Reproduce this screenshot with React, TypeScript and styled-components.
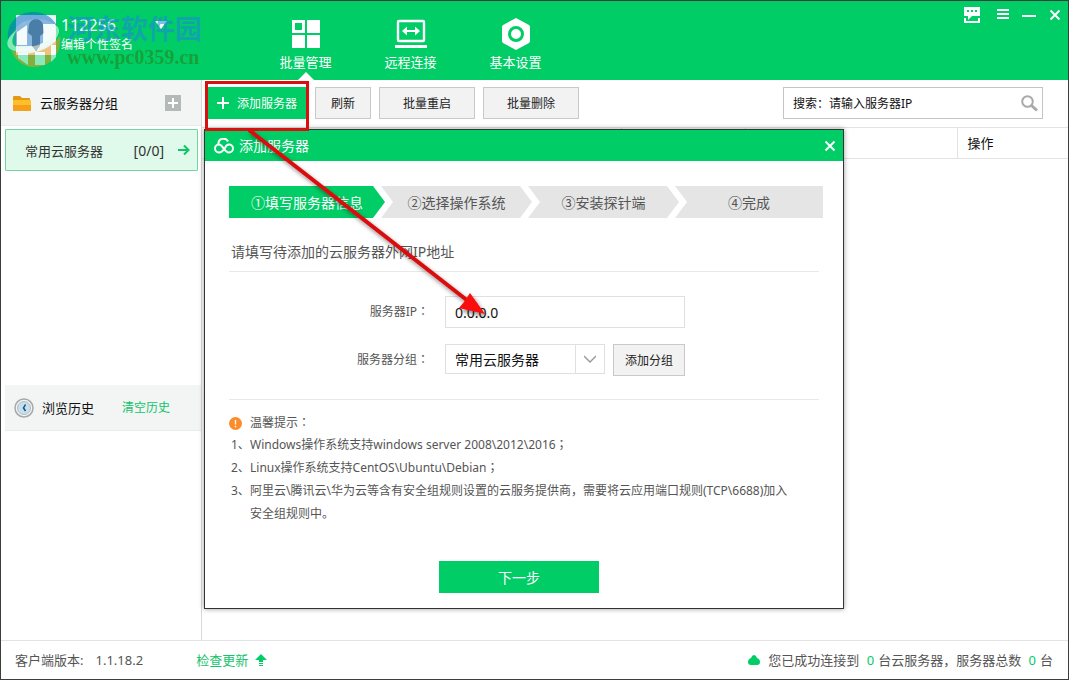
import React from 'react';
import styled, { createGlobalStyle } from 'styled-components';

const green = '#00cd66';
const line = '#e3e3e3';

const GlobalStyle = createGlobalStyle`
  * { box-sizing: border-box; }
  body {
    margin: 0;
    font-family: "Noto Sans", "Noto Sans CJK SC", sans-serif;
    font-size: 13px;
    line-height: 20px;
    color: #111;
    background: #fff;
  }
  button, input, select { font-family: inherit; color: inherit; }
  button { cursor: pointer; }
  svg { flex: none; }
`;

const Window = styled.div`
  position: relative;
  display: flex;
  flex-direction: column;
  min-height: 100vh;
  border: 1px solid #3a3f3c;
  background: #fff;
`;

const Header = styled.header`
  position: relative;
  display: flex;
  height: 79px;
  background: ${green};
  color: #fff;
`;

const Profile = styled.div`
  display: flex;
  gap: 5px;
  width: 252px;
  padding: 14px 0 0 15px;
`;

const ProfileText = styled.div`
  display: flex;
  flex-direction: column;
`;

const UserName = styled.div`
  display: flex;
  align-items: center;
  justify-content: space-between;
  width: 106px;
  font-size: 16px;
  line-height: 20px;
`;

const Signature = styled.span`
  font-size: 12px;
  line-height: 20px;
`;

const Nav = styled.nav`
  display: flex;
`;

const NavItem = styled.button<{ $active?: boolean }>`
  display: flex;
  flex-direction: column;
  align-items: center;
  width: 105px;
  padding: 17px 0 0;
  border: 0;
  background: none;
  color: #fff;
  font-size: 13px;
  line-height: 20px;

  & > svg { margin-bottom: 2px; }

  &::after {
    content: '';
    margin-top: auto;
    border: solid transparent;
    border-width: 0 8px 8px;
    border-bottom-color: ${p => (p.$active ? '#fff' : 'transparent')};
  }
`;

const WindowControls = styled.div`
  display: flex;
  align-items: center;
  gap: 13px;
  height: 28px;
  margin-left: auto;
  padding-right: 7px;
`;

const IconButton = styled.button`
  display: flex;
  padding: 0;
  border: 0;
  background: none;
  color: inherit;
`;

const Watermark = styled.div`
  position: absolute;
  left: 4px;
  top: 10px;
  display: flex;
  gap: 5px;
  opacity: 0.55;
  pointer-events: none;
`;

const WatermarkName = styled.div`
  color: #1c86e0;
  font-size: 27px;
  font-weight: 700;
  line-height: 36px;
`;

const WatermarkUrl = styled.div`
  color: #2c7d14;
  font-family: "Liberation Serif", serif;
  font-size: 20px;
  font-weight: 700;
  line-height: 20px;
`;

const Body = styled.div`
  display: flex;
  flex: 1;
`;

const Sidebar = styled.aside`
  width: 201px;
  border-right: 1px solid #d9d9d9;
`;

const GroupHeader = styled.div`
  display: flex;
  align-items: center;
  gap: 8px;
  height: 46px;
  padding: 0 20px 0 11px;
  background: #f2f5f4;
  border-bottom: 1px solid #e9eceb;

  & > button { margin-left: auto; }
`;

const GroupList = styled.div`
  min-height: 259px;
  padding: 3px 3px 0 4px;
`;

const GroupItem = styled.button`
  display: flex;
  align-items: center;
  width: 100%;
  height: 42px;
  padding: 0 7px 0 19px;
  border: 1px solid #74d3a0;
  border-radius: 1px;
  background: #dff9ea;
  color: #333;
  font-size: 13px;
`;

const GroupCount = styled.span`
  margin: 0 14px 0 auto;
  font-size: 14px;
`;

const History = styled.div`
  display: flex;
  align-items: center;
  gap: 8px;
  height: 46px;
  margin-left: 4px;
  padding: 0 31px 0 9px;
  background: #f2f5f4;
  border-bottom: 1px solid #e9eceb;
`;

const TextLink = styled.a<{ $small?: boolean }>`
  display: flex;
  align-items: center;
  gap: 7px;
  color: #14c46a;
  font-size: ${p => (p.$small ? 12 : 13)}px;
  text-decoration: none;
`;

const HistoryLink = styled(TextLink)`
  margin-left: auto;
`;

const Main = styled.main`
  flex: 1;
  min-width: 0;
`;

const Toolbar = styled.div`
  display: flex;
  align-items: flex-start;
  gap: 8px;
  height: 47px;
  padding: 7px 25px 0 5px;
`;

const Button = styled.button<{ $primary?: boolean; $width: number }>`
  display: flex;
  align-items: center;
  justify-content: center;
  gap: 8px;
  width: ${p => p.$width}px;
  height: 32px;
  padding: 0;
  border: 1px solid ${p => (p.$primary ? green : '#c9c9c9')};
  background: ${p => (p.$primary ? green : '#f2f2f2')};
  color: ${p => (p.$primary ? '#fff' : '#222')};
  font-size: 12px;
`;

const NextButton = styled(Button)`
  margin-left: 210px;
  font-size: 14px;
`;

const SearchBox = styled.label`
  display: flex;
  align-items: center;
  width: 260px;
  height: 32px;
  margin-left: auto;
  padding: 0 4px 0 9px;
  border: 1px solid #c4c4c4;
`;

const SearchInput = styled.input`
  flex: 1;
  min-width: 0;
  padding: 0;
  border: 0;
  outline: 0;
  font-size: 12px;
  &::placeholder { color: #111; opacity: 1; }
`;

const ServerTable = styled.table`
  width: 100%;
  table-layout: fixed;
  border-collapse: collapse;

  th {
    height: 31px;
    padding: 0 10px;
    border-top: 1px solid ${line};
    border-bottom: 1px solid ${line};
    font-weight: 400;
    text-align: left;
  }
  th + th { border-left: 1px solid ${line}; }
`;

const Footer = styled.footer`
  display: flex;
  align-items: center;
  justify-content: space-between;
  height: 39px;
  padding: 0 15px 0 14px;
  border-top: 1px solid ${line};
  color: #555;
`;

const FooterGroup = styled.div`
  display: flex;
  align-items: center;
`;

const Version = styled.span`
  margin: 0 53px 0 12px;
`;

const Status = styled.span`
  margin-left: 8px;
`;

const Count = styled.span`
  margin: 0 4px;
  color: ${green};
`;

/* Full-width colons and semicolons that sit in the middle of their cell. */
const Mark = styled.span`
  font-family: "Noto Sans CJK JP", sans-serif;
  line-height: 0;
`;

const Dialog = styled.section`
  position: absolute;
  left: 203px;
  top: 128px;
  width: 640px;
  padding-bottom: 15px;
  border: 1px solid #333;
  background: #fff;
  box-shadow: 0 0 5px rgba(0, 0, 0, 0.4);
  color: #555;
`;

const DialogTitle = styled.div`
  display: flex;
  align-items: center;
  justify-content: space-between;
  height: 31px;
  padding: 0 7px 0 9px;
  background: ${green};
  color: #fff;
`;

const DialogName = styled.h2`
  display: flex;
  align-items: center;
  gap: 5px;
  margin: 0;
  font-size: 14px;
  font-weight: 400;
`;

const DialogBody = styled.div`
  display: flex;
  flex-direction: column;
  padding: 25px 20px 0 24px;
`;

const Steps = styled.ol`
  display: flex;
  margin: 0;
  padding: 0;
  list-style: none;
`;

const Step = styled.li<{ $active?: boolean; $last?: boolean }>`
  flex: ${p => (p.$last ? '1' : p.$active ? '0 0 156px' : '0 0 151px')};
  height: 32px;
  background: ${p => (p.$active ? green : '#e5e5e5')};
  color: ${p => (p.$active ? '#fff' : '#555')};
  font-size: 14px;
  line-height: 33px;
  text-align: center;
  clip-path: polygon(
    0 0,
    ${p => (p.$last ? '100% 0, 100% 100%' : 'calc(100% - 12px) 0, 100% 50%, calc(100% - 12px) 100%')},
    0 100%,
    ${p => (p.$active ? '0 50%' : '12px 50%')}
  );
  & + & { margin-left: -4px; }
`;

const Section = styled.div`
  margin-right: 4px;
  border-bottom: 1px solid #e8e8e8;
`;

const Prompt = styled.p`
  margin: 0;
  padding: 24px 0 9px 2px;
  font-size: 14px;
`;

const Form = styled.form`
  display: flex;
  flex-direction: column;
  gap: 16px;
  padding: 24px 0 23px;
`;

const Field = styled.div`
  display: flex;
  align-items: flex-start;
`;

const FieldLabel = styled.label`
  width: 200px;
  margin-right: 16px;
  font-size: 12px;
  line-height: 31px;
  text-align: right;
`;

const TextInput = styled.input`
  width: 240px;
  height: 32px;
  padding: 0 9px;
  border: 1px solid #e0e0e0;
  color: #111;
  font-size: 14px;
`;

const SelectBox = styled.div`
  display: flex;
  position: relative;
  width: 160px;
  height: 30px;
  margin-right: 8px;
  border: 1px solid #e0e0e0;
`;

const Select = styled.select`
  flex: 1;
  padding: 0 36px 0 9px;
  border: 0;
  appearance: none;
  background: none;
  color: #111;
  font-size: 14px;
`;

const SelectArrow = styled.span`
  position: absolute;
  right: 0;
  top: 0;
  bottom: 0;
  display: flex;
  align-items: center;
  justify-content: center;
  width: 29px;
  border-left: 1px solid #e0e0e0;
  pointer-events: none;
`;

const Tips = styled.div`
  padding: 13px 0 36px;
  font-size: 12px;
`;

const TipsTitle = styled.div`
  display: flex;
  align-items: center;
  gap: 8px;
  line-height: 20px;
`;

const TipList = styled.ol`
  margin: 0;
  padding: 0 0 0 2px;
  list-style: none;
  line-height: 23px;
`;

const Tip = styled.li`
  display: flex;
`;

const TipNumber = styled.span`
  flex: none;
  width: 19px;
`;

const Annotation = styled.svg`
  position: absolute;
  left: 203px;
  top: 79px;
  pointer-events: none;
`;

const Avatar = () => (
  <svg width="40" height="52" viewBox="0 0 40 52" aria-hidden="true">
    <rect width="40" height="40" fill="#e9f5f4" />
    <path d="M13 10c2-8 13-7 14 0l1 8-4 3v10l-4 5-4-5V21l-4-3z" fill="#5f7280" />
    <path d="M8 5l1 2h2l-2 1 1 3-2-2-2 2 1-3-2-1h2z" fill="#fff" />
  </svg>
);

const GridIcon = () => (
  <svg width="28" height="32" viewBox="0 2 28 32" aria-hidden="true">
    <path fill="#fff" fillRule="evenodd" d="M0 4h13v13H0zM3 7v7h7V7zM15 4h13v13H15zM0 19h13v13H0zM15 19h13v13H15z" />
  </svg>
);

const RemoteIcon = () => (
  <svg width="32" height="32" viewBox="0 2 32 32" aria-hidden="true">
    <rect x="3" y="5" width="26" height="20" rx="1" fill="none" stroke="#fff" strokeWidth="2.4" />
    <path fill="#fff" d="M0 29h32v3H0zM7 15l5-4.500v3.500h8v-3.500l5 4.500-5 4.500V16h-8v3.500z" />
  </svg>
);

const SettingsIcon = () => (
  <svg width="28" height="32" viewBox="0 2 28 32" aria-hidden="true">
    <path d="M14 2l13 7q1 1 1 2v14q0 1-1 2l-13 7-13-7q-1-1-1-2V11q0-1 1-2z" fill="#fff" />
    <circle cx="14" cy="18" r="6.500" fill="#fff" stroke={green} strokeWidth="3" />
  </svg>
);

const CloseIcon = () => (
  <svg width="12" height="12" viewBox="0 0 12 12" aria-hidden="true">
    <path d="M1.500 1.500l9 9m0-9l-9 9" stroke="#fff" strokeWidth="2" />
  </svg>
);

const FolderIcon = () => (
  <svg width="20" height="18" viewBox="0 0 20 18" aria-hidden="true">
    <path d="M1 3q0-1 1-1h6l2 2h7q1 0 1 1v11H1z" fill="#e39a10" />
    <path d="M1 16V7q0-1 1-1h16q1 0 1 1v9q0 1-1 1H2q-1 0-1-1z" fill="#fdc02a" />
    <path d="M1 11h18v5q0 1-1 1H2q-1 0-1-1z" fill="#f5a01a" />
  </svg>
);

const ClockIcon = () => (
  <svg width="20" height="20" viewBox="0 0 20 20" aria-hidden="true">
    <circle cx="10" cy="10" r="9" fill="#f4f4f4" stroke="#a7a7a7" strokeWidth="1.500" />
    <circle cx="10" cy="10" r="6.500" fill="#c4e0ef" stroke="#b0bcc4" />
    <path d="M11.500 6.500l-2 3.500 2 3" fill="none" stroke="#1f4d78" strokeWidth="1.500" />
  </svg>
);

export default function App() {
  return (
    <>
      <GlobalStyle />
      <Window>
        <Header>
          <Profile>
            <Avatar />
            <ProfileText>
              <UserName>
                112256
                <svg width="12" height="8" viewBox="0 0 12 8" aria-hidden="true"><path d="M0 0h12L6 8z" fill="#fff" /></svg>
              </UserName>
              <Signature>编辑个性签名</Signature>
            </ProfileText>
          </Profile>
          <Nav>
            <NavItem $active><GridIcon />批量管理</NavItem>
            <NavItem><RemoteIcon />远程连接</NavItem>
            <NavItem><SettingsIcon />基本设置</NavItem>
          </Nav>
          <WindowControls>
            <IconButton aria-label="反馈">
              <svg width="24" height="18" viewBox="-3 0 24 18" aria-hidden="true">
                <path d="M1 1h16v9H9l-4 4v-4H1z" fill="#fff" />
                <path d="M4 5h2M8 5h2M12 5h2" stroke={green} strokeWidth="2" />
                <path d="M2 12v4h14v-4" fill="none" stroke="#fff" strokeWidth="2" />
              </svg>
            </IconButton>
            <IconButton aria-label="菜单">
              <svg width="12" height="12" viewBox="0 0 12 12" aria-hidden="true"><path d="M0 1h12M0 5h12M0 9h12" stroke="#fff" strokeWidth="2" /></svg>
            </IconButton>
            <IconButton aria-label="最小化">
              <svg width="14" height="12" viewBox="0 0 14 12" aria-hidden="true"><path d="M0 7h14" stroke="#fff" strokeWidth="2" /></svg>
            </IconButton>
            <IconButton aria-label="关闭"><CloseIcon /></IconButton>
          </WindowControls>
          <Watermark>
            <svg width="57" height="58" viewBox="0 1 57 58" aria-hidden="true">
              <path d="M3 30C1 14 12 2 28 2c12 0 20 6 24 14L40 12C26 8 12 14 3 30z" fill="#0c70c8" />
              <path d="M8 22C14 8 40 4 51 16c-7 2-12 12-14 20H10z" fill="#3c86cc" />
              <path d="M12 22l10-7v20H12zM38 14h12v18H38z" fill="#fff" />
              <path d="M6 40c14 8 38 2 49-14 2 16-8 31-26 31C18 57 10 50 6 40z" fill="#ef9a1c" />
              <path d="M13 43h10v12l-10-7zM30 42h10v13H30zM46 35h5v12l-5 5z" fill="#fff" />
              <path d="M12 20C-3 31 0 42 17 42c18 0 36-9 37-21 0-5-4-7-10-7 9 2 8 9 0 15-9 7-23 10-31 8-8-1-7-9-1-17z" fill="#f3fff8" />
            </svg>
            <div>
              <WatermarkName>河东软件园</WatermarkName>
              <WatermarkUrl>www.pc0359.cn</WatermarkUrl>
            </div>
          </Watermark>
        </Header>

        <Body>
          <Sidebar>
            <GroupHeader>
              <FolderIcon />
              云服务器分组
              <IconButton aria-label="新建分组">
                <svg width="16" height="16" viewBox="0 0 16 16" aria-hidden="true">
                  <path d="M0 0h16v16H0z" fill="#b3bab7" />
                  <path d="M3 8h10M8 3v10" stroke="#fff" strokeWidth="2" />
                </svg>
              </IconButton>
            </GroupHeader>
            <GroupList>
              <GroupItem>
                常用云服务器
                <GroupCount>[0/0]</GroupCount>
                <svg width="12" height="12" viewBox="0 0 12 12" aria-hidden="true">
                  <path d="M0 6h10M6 1.500L10.500 6 6 10.500" fill="none" stroke="#12c468" strokeWidth="2" />
                </svg>
              </GroupItem>
            </GroupList>
            <History>
              <ClockIcon />
              浏览历史
              <HistoryLink href="#clear" $small>清空历史</HistoryLink>
            </History>
          </Sidebar>

          <Main>
            <Toolbar>
              <Button $primary $width={100}>
                <svg width="12" height="12" viewBox="0 0 12 12" aria-hidden="true"><path d="M0 6h12M6 0v12" stroke="#fff" strokeWidth="2" /></svg>
                添加服务器
              </Button>
              <Button $width={56}>刷新</Button>
              <Button $width={96}>批量重启</Button>
              <Button $width={96}>批量删除</Button>
              <SearchBox>
                <SearchInput aria-label="搜索" placeholder="搜索：请输入服务器IP" />
                <svg width="17" height="17" viewBox="0 0 17 17" aria-hidden="true">
                  <circle cx="6.500" cy="6.500" r="5.300" fill="none" stroke="#aaa" strokeWidth="2" />
                  <path d="M10.500 10.500L16 15.500" stroke="#aaa" strokeWidth="3" />
                </svg>
              </SearchBox>
            </Toolbar>
            <ServerTable>
              <colgroup>
                <col />
                <col width="124" />
                <col width="212" />
                <col width="111" />
              </colgroup>
              <thead>
                <tr><th /><th /><th /><th scope="col">操作</th></tr>
              </thead>
            </ServerTable>
          </Main>
        </Body>

        <Footer>
          <FooterGroup>
            客户端版本:
            <Version>1.1.18.2</Version>
            <TextLink href="#update">
              检查更新
              <svg width="12" height="12" viewBox="0 0 12 12" aria-hidden="true"><path d="M6 0l6 6H8v2H4V6H0zM4 9h4v1H4zM4 11h4v1H4z" fill={green} /></svg>
            </TextLink>
          </FooterGroup>
          <FooterGroup>
            <svg width="12" height="10" viewBox="0 0 12 10" aria-hidden="true"><path d="M3 3q1-3 3-3t3 3q3 1 3 4t-3 3H3q-3 0-3-3t3-4z" fill={green} /></svg>
            <Status>
              您已成功连接到 <Count>0</Count>台云服务器，服务器总数 <Count>0</Count>台
            </Status>
          </FooterGroup>
        </Footer>

        <Dialog role="dialog" aria-labelledby="dialog-name">
          <DialogTitle>
            <DialogName id="dialog-name">
              <svg width="20" height="16" viewBox="0 0 20 16" aria-hidden="true">
                <path d="M4.500 6C4 0 12 -1 14 3.500M11 10c-2 3-3.500 4.500-6 4.500A4 4 0 015 6.500c4 0 5 8 10 8a4 4 0 000-8c-2 0-3 1-4 3.500" fill="none" stroke="#fff" strokeWidth="2" />
              </svg>
              添加服务器
            </DialogName>
            <IconButton aria-label="关闭"><CloseIcon /></IconButton>
          </DialogTitle>
          <DialogBody>
            <Steps>
              <Step $active>①填写服务器信息</Step>
              <Step>②选择操作系统</Step>
              <Step>③安装探针端</Step>
              <Step $last>④完成</Step>
            </Steps>
            <Section>
              <Prompt>请填写待添加的云服务器外网IP地址</Prompt>
            </Section>
            <Section>
              <Form>
                <Field>
                  <FieldLabel htmlFor="server-ip">服务器IP<Mark>：</Mark></FieldLabel>
                  <TextInput id="server-ip" defaultValue="0.0.0.0" />
                </Field>
                <Field>
                  <FieldLabel htmlFor="server-group">服务器分组<Mark>：</Mark></FieldLabel>
                  <SelectBox>
                    <Select id="server-group"><option>常用云服务器</option></Select>
                    <SelectArrow>
                      <svg width="12" height="8" viewBox="0 0 12 8" aria-hidden="true"><path d="M0 1l6 6 6-6" fill="none" stroke="#999" strokeWidth="1.400" /></svg>
                    </SelectArrow>
                  </SelectBox>
                  <Button type="button" $width={72}>添加分组</Button>
                </Field>
              </Form>
            </Section>
            <Tips>
              <TipsTitle>
                <svg width="13" height="13" viewBox="0 0 13 13" aria-hidden="true">
                  <circle cx="6.500" cy="6.500" r="6.500" fill="#fb8c2a" />
                  <path d="M6.500 3v4.500M6.500 8.800v1.400" stroke="#fff" strokeWidth="1.300" />
                </svg>
                <span>温馨提示<Mark>：</Mark></span>
              </TipsTitle>
              <TipList>
                <Tip><TipNumber>1、</TipNumber><span>Windows操作系统支持windows server 2008\2012\2016<Mark>；</Mark></span></Tip>
                <Tip><TipNumber>2、</TipNumber><span>Linux操作系统支持CentOS\Ubuntu\Debian<Mark>；</Mark></span></Tip>
                <Tip><TipNumber>3、</TipNumber><span>阿里云\腾讯云\华为云等含有安全组规则设置的云服务提供商，需要将云应用端口规则(TCP\6688)加入<br />安全组规则中。</span></Tip>
              </TipList>
            </Tips>
            <NextButton $primary $width={160}>下一步</NextButton>
          </DialogBody>
        </Dialog>

        <Annotation width="300" height="250" viewBox="0 0 300 250" aria-hidden="true">
          <defs>
            <filter id="arrow-shadow" x="-10%" y="-10%" width="120%" height="120%">
              <feDropShadow dx="2" dy="3" stdDeviation="2" floodOpacity="0.45" />
            </filter>
          </defs>
          <rect x="2.500" y="2.500" width="101" height="47" fill="none" stroke="#d91010" strokeWidth="3" />
          <g filter="url(#arrow-shadow)">
            <path d="M45 50L264 221" stroke="#d91010" strokeWidth="4" />
            <path d="M281 234l-26-6 5-6 6-9z" fill="#f90808" />
          </g>
        </Annotation>
      </Window>
    </>
  );
}
